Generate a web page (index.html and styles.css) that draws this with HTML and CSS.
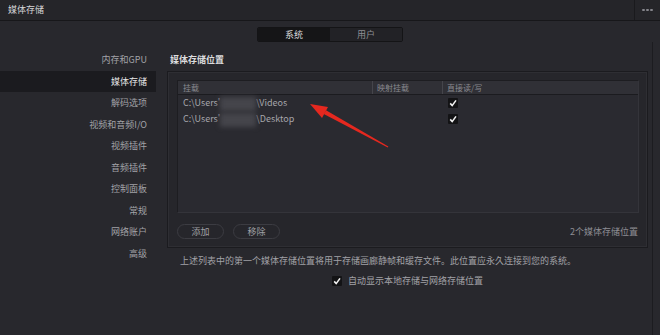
FILE: index.html
```html
<!DOCTYPE html>
<html lang="zh-CN">
<head>
  <meta charset="UTF-8">
  <title>媒体存储</title>
  <link rel="stylesheet" href="styles.css">
</head>
<body>
  <div class="titlebar">
    <span class="title">媒体存储</span>
    <span class="more"><i></i><i></i><i></i></span>
  </div>

  <div class="tabs">
    <span class="tab active">系统</span>
    <span class="tab">用户</span>
  </div>

  <div class="layout">
    <ul class="sidebar">
      <li>内存和GPU</li>
      <li class="selected">媒体存储</li>
      <li>解码选项</li>
      <li>视频和音频I/O</li>
      <li>视频插件</li>
      <li>音频插件</li>
      <li>控制面板</li>
      <li>常规</li>
      <li>网络账户</li>
      <li>高级</li>
    </ul>

    <main class="main">
      <h2>媒体存储位置</h2>
      <section class="panel">
        <div class="table">
          <div class="thead">
            <span class="col-path">挂载</span>
            <span class="col-map">映射挂载</span>
            <span class="col-rw">直接读/写</span>
          </div>
          <div class="row">
            <span class="col-path">C:\Users'<span class="smudge"></span>\Videos</span>
            <span class="col-map"></span>
            <span class="col-rw"><span class="check"><svg viewBox="0 0 10 10"><path d="M2.2 5.4 L4.2 7.6 L8 2.4"/></svg></span></span>
          </div>
          <div class="row">
            <span class="col-path">C:\Users'<span class="smudge"></span>\Desktop</span>
            <span class="col-map"></span>
            <span class="col-rw"><span class="check"><svg viewBox="0 0 10 10"><path d="M2.2 5.4 L4.2 7.6 L8 2.4"/></svg></span></span>
          </div>
        </div>
        <div class="panel-foot">
          <button class="pill">添加</button>
          <button class="pill">移除</button>
          <span class="count">2个媒体存储位置</span>
        </div>
      </section>
      <p class="note">上述列表中的第一个媒体存储位置将用于存储画廊静帧和缓存文件。此位置应永久连接到您的系统。</p>
      <div class="auto">
        <span class="check"><svg viewBox="0 0 10 10"><path d="M2.2 5.4 L4.2 7.6 L8 2.4"/></svg></span>
        <span>自动显示本地存储与网络存储位置</span>
      </div>
    </main>
  </div>

  <!-- 标注箭头 -->
  <svg class="arrow" viewBox="0 0 660 335">
    <polygon points="310,104 328,107 322,118"/>
    <polygon points="326,110.3 323.8,114.1 387.8,147.4 388.3,146.6"/>
  </svg>
</body>
</html>
```

FILE: styles.css
```css
* {
  margin: 0;
  padding: 0;
  box-sizing: border-box;
}

body {
  width: 660px;
  height: 335px;
  overflow: hidden;
  position: relative;
  background-color: #28282d;
  color: #a2a2a7;
  font-family: "Noto Sans CJK SC", "Noto Sans", sans-serif;
  font-size: 9px;
}

.titlebar {
  display: flex;
  height: 21px;
  border-bottom: 1px solid #17171a;
  background-color: #252529;
}

.title {
  flex: 1;
  padding-left: 8px;
  line-height: 20px;
  color: #d6d6d8;
}

.more {
  width: 26px;
  display: flex;
  align-items: center;
  justify-content: center;
  gap: 1.5px;
  border-left: 1px solid #1a1a1d;
}

.more i {
  width: 2.5px;
  height: 2.5px;
  border-radius: 50%;
  background-color: #85858b;
}

.tabs {
  display: flex;
  width: 146px;
  height: 15px;
  margin: 6px auto 0;
  border: 1px solid #141416;
  border-radius: 2px;
  overflow: hidden;
}

.tab {
  flex: 1;
  text-align: center;
  line-height: 13px;
  background-color: #222226;
  color: #8e8e94;
}

.tab.active {
  background-color: #151517;
  color: #dadadc;
}

.layout {
  display: flex;
}

.sidebar {
  list-style: none;
  width: 156px;
  padding-top: 7px;
}

.sidebar li {
  height: 21.5px;
  line-height: 21.5px;
  text-align: right;
  padding-right: 9px;
}

.sidebar li.selected {
  background-color: #1b1b1f;
  color: #e6e6e8;
}

.main {
  width: 486px;
  margin-left: 11px;
  padding: 11px 4px 0 0;
  border-right: 1px solid #1c1c20;
  height: 293px;
}

.main h2 {
  font-size: 9px;
  font-weight: bold;
  color: #dcdcde;
  line-height: 14px;
  margin: 0 0 4px 3px;
}

.panel {
  height: 177px;
  border: 1px solid #1b1b1f;
  background-color: #26262b;
  padding: 8px 8px 8px 9px;
  box-shadow: inset 0 0 0 1px #2e2e33;
}

.table {
  height: 133px;
  background-color: #2a2a30;
  border: 1px solid #1d1d21;
  border-right-color: #34343a;
  border-bottom-color: #34343a;
}

.thead,
.row {
  display: flex;
}

.thead {
  height: 14px;
  line-height: 14px;
  background-color: #303036;
  border-bottom: 1px solid #1b1b1f;
  color: #8a8a90;
  font-size: 8px;
}

.thead span + span {
  border-left: 1px solid #45454b;
}

.row {
  height: 16px;
  line-height: 16px;
  color: #a6a6ab;
}

.col-path {
  width: 194px;
  padding-left: 5px;
  white-space: nowrap;
}

.col-map {
  width: 70px;
  padding-left: 4px;
}

.col-rw {
  flex: 1;
  padding-left: 4px;
}

.row .col-rw {
  display: flex;
  align-items: center;
  padding-left: 6px;
}

.smudge {
  display: inline-block;
  width: 36px;
  height: 14px;
  vertical-align: middle;
  background-color: #45454b;
  filter: blur(2.5px);
}

.check {
  display: inline-block;
  width: 10px;
  height: 10px;
  background-color: #131315;
  border-radius: 1px;
}

.check svg {
  display: block;
  width: 10px;
  height: 10px;
  fill: none;
  stroke: #f2f2f2;
  stroke-width: 1.6;
}

.panel-foot {
  display: flex;
  align-items: center;
  gap: 9px;
  margin-top: 11px;
  height: 15px;
}

.pill {
  width: 47px;
  height: 15px;
  border: 1px solid #3c3c42;
  border-radius: 8px;
  background-color: #26262b;
  color: #a0a0a5;
  font-family: inherit;
  font-size: 9px;
}

.count {
  margin-left: auto;
  padding-right: 1px;
  color: #8e8e94;
}

.note {
  margin-top: 6px;
  padding-left: 13px;
  line-height: 14px;
  color: #a2a2a7;
}

.auto {
  display: flex;
  align-items: center;
  justify-content: center;
  gap: 6px;
  margin-top: 6px;
  line-height: 14px;
  width: 481px;
}

.arrow {
  position: absolute;
  left: 0;
  top: 0;
  width: 660px;
  height: 335px;
  fill: #e5281f;
  pointer-events: none;
}
```
